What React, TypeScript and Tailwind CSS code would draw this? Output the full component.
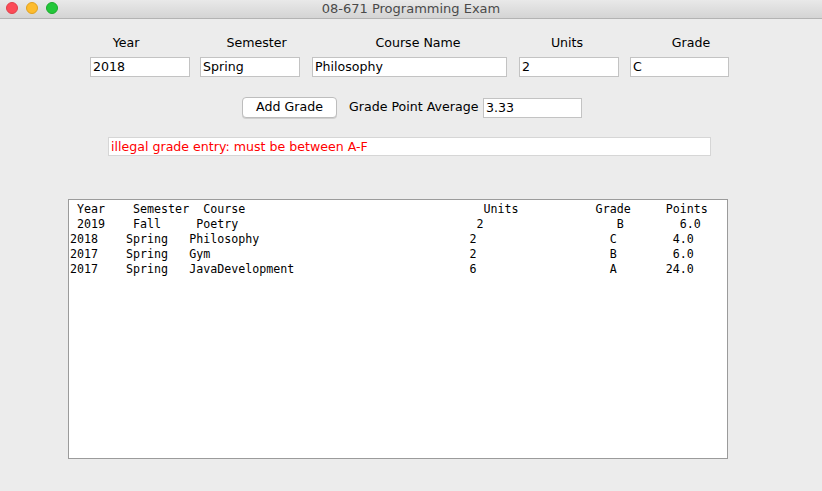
import React from "react";

type Cell = [number, string];

// each table row: [column index, text]; the list is shown in a monospace text area
const rows: Cell[][] = [
  [[1, "Year"], [9, "Semester"], [19, "Course"], [59, "Units"], [75, "Grade"], [85, "Points"]],
  [[1, "2019"], [9, "Fall"], [18, "Poetry"], [58, "2"], [78, "B"], [87, "6.0"]],
  [[0, "2018"], [8, "Spring"], [17, "Philosophy"], [57, "2"], [77, "C"], [86, "4.0"]],
  [[0, "2017"], [8, "Spring"], [17, "Gym"], [57, "2"], [77, "B"], [86, "6.0"]],
  [[0, "2017"], [8, "Spring"], [17, "JavaDevelopment"], [57, "6"], [77, "A"], [85, "24.0"]],
];

function line(cells: Cell[]) {
  let s = "";
  for (const [col, text] of cells) {
    while (s.length < col) s += " ";
    s += text;
  }
  return s;
}

function Field({ value, className }: { value: string; className: string }) {
  return (
    <div
      className={`h-[20px] bg-white border border-[#c3c3c3] pl-[2px] text-[12.6px] leading-[18px] text-black ${className}`}
    >
      {value}
    </div>
  );
}

export default function App() {
  const ui = { fontFamily: '"DejaVu Sans", "Open Sans", sans-serif' };

  return (
    <div className="w-[822px] h-[491px] bg-[#ececec] overflow-hidden" style={ui}>
      {/* Title bar */}
      <div className="relative h-[19px] border-b border-[#b3b3b3] bg-gradient-to-b from-[#e9e9e9] to-[#d4d4d4] flex items-center justify-center">
        <div className="absolute left-[6px] top-[2px] flex gap-[8px]">
          <span className="w-[12px] h-[12px] rounded-full bg-[#fc4b57] border border-[#e0404a]" />
          <span className="w-[12px] h-[12px] rounded-full bg-[#fdbc2e] border border-[#e0a220]" />
          <span className="w-[12px] h-[12px] rounded-full bg-[#23c73a] border border-[#1aab2c]" />
        </div>
        <span className="text-[13px] text-[#4a4a4a] leading-none -mt-[1px]">08-671 Programming Exam</span>
      </div>

      {/* Column labels */}
      <div className="flex mt-[16px] h-[16px] text-[12.6px] leading-[16px] text-black">
        <span className="ml-[76px] w-[100px] text-center">Year</span>
        <span className="ml-[30px] w-[101px] text-center">Semester</span>
        <span className="ml-[61px] w-[100px] text-center">Course Name</span>
        <span className="ml-[49px] w-[100px] text-center">Units</span>
        <span className="ml-[24px] w-[100px] text-center">Grade</span>
      </div>

      {/* Inputs */}
      <div className="flex mt-[6px] pl-[90px]">
        <Field value="2018" className="w-[100px]" />
        <Field value="Spring" className="ml-[10px] w-[100px]" />
        <Field value="Philosophy" className="ml-[12px] w-[195px]" />
        <Field value="2" className="ml-[12px] w-[100px]" />
        <Field value="C" className="ml-[11px] w-[99px]" />
      </div>

      {/* Add grade + GPA */}
      <div className="flex items-center mt-[20px] pl-[242px]">
        <button className="w-[95px] h-[21px] bg-white border border-[#bdbdbd] rounded-[4px] text-[12.6px] leading-none text-black shadow-[0_1px_0_#d0d0d0]">
          Add Grade
        </button>
        <span className="ml-[12px] w-[134px] text-[12.6px] text-black">Grade Point Average</span>
        <Field value="3.33" className="w-[99px]" />
      </div>

      {/* Error message */}
      <div className="mt-[19px] ml-[108px] w-[603px] h-[19px] bg-white border border-[#d6d6d6] pl-[2px] text-[12.6px] leading-[17px] text-[#ff0000]">
        illegal grade entry: must be between A-F
      </div>

      {/* Grades list */}
      <div className="mt-[43px] ml-[68px] w-[660px] h-[260px] bg-white border border-[#9b9b9b] pl-[1px] pt-[2px]">
        <pre
          className="text-[11.65px] leading-[15px] text-black m-0"
          style={{ fontFamily: '"DejaVu Sans Mono", "Liberation Mono", monospace' }}
        >
          {rows.map(line).join("\n")}
        </pre>
      </div>
    </div>
  );
}
